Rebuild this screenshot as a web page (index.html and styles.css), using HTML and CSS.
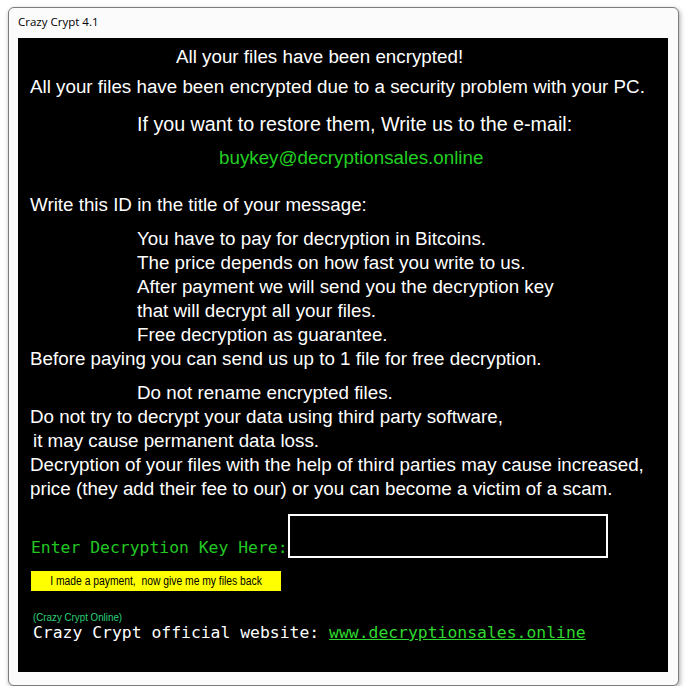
FILE: index.html
```html
<!DOCTYPE html>
<html lang="en">
<head>
  <meta charset="UTF-8" />
  <title>Crazy Crypt 4.1</title>
  <link rel="stylesheet" href="styles.css">
</head>
<body>
  <div class="window">
    <div class="titlebar">Crazy Crypt 4.1</div>
    <div class="panel">
      <div class="line title">All your files have been encrypted!</div>
      <div class="line intro">All your files have been encrypted due to a security problem with your PC.</div>
      <div class="line restore">If you want to restore them, Write us to the e-mail:</div>
      <div class="line email">buykey@decryptionsales.online</div>
      <div class="line write-id">Write this ID in the title of your message:</div>

      <div class="block">
        <div class="line indent">You have to pay for decryption in Bitcoins.</div>
        <div class="line indent">The price depends on how fast you write to us.</div>
        <div class="line indent">After payment we will send you the decryption key</div>
        <div class="line indent">that will decrypt all your files.</div>
        <div class="line indent">Free decryption as guarantee.</div>
        <div class="line">Before paying you can send us up to 1 file for free decryption.</div>
      </div>

      <div class="block warn">
        <div class="line indent">Do not rename encrypted files.</div>
        <div class="line">Do not try to decrypt your data using third party software,</div>
        <div class="line nudge">it may cause permanent data loss.</div>
        <div class="line">Decryption of your files with the help of third parties may cause increased,</div>
        <div class="line">price (they add their fee to our) or you can become a victim of a scam.</div>
      </div>

      <div class="key-row">
        <span class="key-label">Enter Decryption Key Here:</span>
        <input class="key-input" type="text">
      </div>
      <button class="pay"><span class="narrow">I made a payment,&nbsp; now give me my files back</span></button>

      <div class="online"><span class="narrow">(Crazy Crypt Online)</span></div>
      <div class="website">Crazy Crypt official website: <a href="#">www.decryptionsales.online</a></div>
    </div>
  </div>
</body>
</html>
```

FILE: styles.css
```css
body {
  margin: 0;
  background: #fff;
}

.window {
  margin: 7px 0 0 8px;
  width: 671px;
  height: 679px;
  box-sizing: border-box;
  border: 1px solid #7c7c7c;
  border-radius: 6px;
  background: #fbfbfb;
  box-shadow: 1px 2px 5px rgba(0, 0, 0, 0.35);
  padding: 0 10px 0 9px;
}

.titlebar {
  height: 30px;
  line-height: 28px;
  font-family: "Open Sans", "Liberation Sans", sans-serif;
  font-size: 11.5px;
  color: #000;
}

.panel {
  height: 634px;
  background: #000;
  color: #fff;
  font-family: "Liberation Sans", Arial, sans-serif;
  font-size: 18.8px;
  padding: 7px 0 0 12px;
  box-sizing: border-box;
}

.line {
  line-height: 24px;
  white-space: pre;
}

.title {
  margin-left: 146px;
}

.intro {
  margin-top: 6px;
}

.restore {
  margin-top: 13px;
  margin-left: 107px;
  font-size: 19.7px;
}

.email {
  margin-top: 10px;
  margin-left: 189px;
  color: #22d022;
}

.write-id {
  margin-top: 23px;
}

.block {
  margin-top: 10px;
}

.indent {
  margin-left: 107px;
}

.nudge {
  margin-left: 3px;
}

.key-row {
  display: flex;
  align-items: flex-end;
  margin-top: 13px;
  margin-left: 1px;
}

.key-label {
  font-family: "DejaVu Sans Mono", "Liberation Mono", monospace;
  font-size: 16.4px;
  line-height: 20px;
  color: #22c822;
}

.key-input {
  width: 320px;
  height: 44px;
  box-sizing: border-box;
  margin: 0;
  border: 2px solid #fff;
  background: #000;
  color: #fff;
  outline: none;
}

.pay {
  display: block;
  margin: 13px 0 0 1px;
  width: 250px;
  height: 20px;
  padding: 0;
  border: none;
  background: #ffff00;
  color: #000;
  font-family: "Liberation Sans", Arial, sans-serif;
  font-size: 12px;
  white-space: nowrap;
}

.narrow {
  display: inline-block;
  transform: scaleX(0.86);
  transform-origin: center;
}

.online {
  margin: 20px 0 0 3px;
  font-family: "Liberation Sans", Arial, sans-serif;
  font-size: 11.5px;
  line-height: 13px;
  color: #2ed07a;
}

.online .narrow {
  transform: scaleX(0.85);
  transform-origin: left;
}

.website {
  margin-left: 3px;
  font-family: "DejaVu Sans Mono", "Liberation Mono", monospace;
  font-size: 16.4px;
  line-height: 17px;
  white-space: pre;
}

.website a {
  color: #2ed82e;
  text-decoration: underline;
}
```
